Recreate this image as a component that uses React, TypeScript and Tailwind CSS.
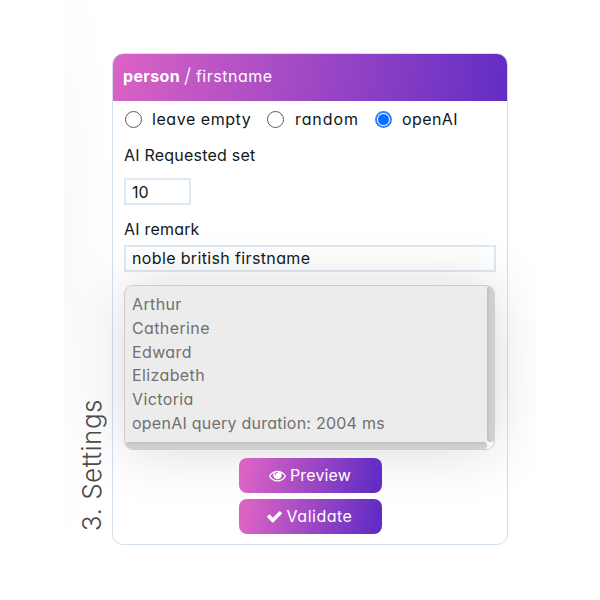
import React from "react";

function Radio({ checked = false }: { checked?: boolean }) {
  return (
    <span
      className={
        "flex h-[17px] w-[17px] shrink-0 items-center justify-center rounded-full bg-white " +
        (checked ? "border-2 border-[#2a86ff]" : "border border-[#5c5c5c]")
      }
    >
      {checked && <span className="h-[11px] w-[11px] rounded-full bg-[#0a6cff]" />}
    </span>
  );
}

function EyeIcon() {
  return (
    <svg viewBox="0 0 1792 1792" className="h-[17px] w-[17px]" fill="currentColor">
      <path d="M1664 960q-152-236-381-353 61 104 61 225 0 185-131.5 316.5t-316.5 131.5-316.5-131.5-131.5-316.5q0-121 61-225-229 117-381 353 133 205 333.5 326.5t434.5 121.5 434.5-121.5 333.5-326.5zm-720-384q0-20-14-34t-34-14q-125 0-214.5 89.5t-89.5 214.5q0 20 14 34t34 14 34-14 14-34q0-86 61-147t147-61q20 0 34-14t14-34zm848 384q0 34-20 69-140 230-376.5 368.5t-499.5 138.5-499.5-139-376.5-368q-20-35-20-69t20-69q140-229 376.5-368t499.5-139 499.5 139 376.5 368q20 35 20 69z" />
    </svg>
  );
}

function CheckIcon() {
  return (
    <svg viewBox="0 0 1792 1792" className="h-[17px] w-[17px]" fill="currentColor">
      <path d="M1671 566q0 40-28 68l-724 724-136 136q-28 28-68 28t-68-28l-136-136-362-362q-28-28-28-68t28-68l136-136q28-28 68-28t68 28l294 295 656-657q28-28 68-28t68 28l136 136q28 28 28 68z" />
    </svg>
  );
}

const names = ["Arthur", "Catherine", "Edward", "Elizabeth", "Victoria"];

export default function App() {
  return (
    <div className="h-[600px] w-[600px] bg-white font-['Inter','Liberation_Sans',sans-serif] text-[16px] leading-6 text-[#101820] [font-feature-settings:'cv11']">
      <div className="flex h-[600px] w-[537px] overflow-hidden pl-[64px]">
        <div className="flex h-[544px] w-12 shrink-0 items-end bg-[radial-gradient(ellipse_at_0%_45%,#f9f9f9,#ffffff_75%)] pb-[13px] pl-[9px]">
          <div className="rotate-180 whitespace-nowrap text-[26px] font-light leading-[37px] tracking-[0.5px] text-[#4a4a4a] [writing-mode:vertical-rl]">
            3. Settings
          </div>
        </div>
        <main className="mt-[53px] h-[492px] w-[396px] shrink-0 rounded-[11px] border border-[#d3e1ef]">
          <header className="flex h-[47px] items-center rounded-t-[10px] bg-[linear-gradient(100deg,#db63c4,#622dc4)] pb-[4px] pl-[10px] text-white">
            <b className="text-[16px] font-bold tracking-[0.35px]">person</b>
            <span className="ml-[4px] text-[20px] font-light leading-6">/</span>
            <span className="ml-[5px] text-[16px] tracking-[0.5px]">firstname</span>
          </header>
          <div className="pl-[11px]">
            <div className="mt-[6px] flex h-6 items-center pl-[1px]">
              <Radio />
              <span className="ml-[10px] w-[115px] tracking-[0.55px]">leave empty</span>
              <Radio />
              <span className="ml-[11px] w-[80px] tracking-[0.9px]">random</span>
              <Radio checked />
              <span className="ml-[10px] tracking-[0.4px]">openAI</span>
            </div>
            <div className="mt-3 tracking-[0.22px]">AI Requested set</div>
            <div className="mt-[11px] flex h-[27px] w-[67px] items-center border-2 border-[#dfe9f3] pl-[6px]">
              10
            </div>
            <div className="mt-3 tracking-[0.2px]">AI remark</div>
            <div className="mt-[4px] flex h-[27px] w-[372px] items-center border-2 border-[#dfe9f3] pb-px pl-[6px] tracking-[0.36px]">
              noble british firstname
            </div>
            <div className="mt-[13px] flex h-[165px] w-[371px] flex-col overflow-hidden rounded-[9px] border border-[#cdcdcd] bg-[#ececec] text-[#707070] shadow-[0_0_58px_rgba(0,0,0,0.15)]">
              <div className="flex h-[156px]">
                <div className="flex-1 pl-[7px] pt-[7px] leading-[23.8px] tracking-[0.38px]">
                  {names.map((n) => (
                    <div key={n}>{n}</div>
                  ))}
                  <div className="tracking-[0.24px]">openAI query duration: 2004 ms</div>
                </div>
                <div className="h-[156px] w-[7px] rounded-b-[4px] rounded-t-[4px] bg-gradient-to-r from-[#c2c2c2] via-[#cecece] to-[#d2d2d2]" />
              </div>
              <div className="flex h-[7px] bg-gradient-to-r from-[#ececec] from-90% to-[#f8f8f8]">
                <div className="h-[7px] w-[362px] rounded-r-[4px] rounded-l-[4px] bg-gradient-to-b from-[#c2c2c2] via-[#cecece] to-[#d2d2d2]" />
              </div>
            </div>
            <div className="mr-[11px] mt-2 flex flex-col items-center gap-[6px] text-white">
              <button className="flex h-[35px] w-[143px] items-center justify-center gap-[4px] rounded-[8px] bg-[linear-gradient(100deg,#db63c4_5%,#622dc4_95%)] pb-px tracking-[0.15px]">
                <EyeIcon />
                Preview
              </button>
              <button className="flex h-[35px] w-[143px] items-center justify-center gap-[4px] rounded-[8px] bg-[linear-gradient(100deg,#db63c4_5%,#622dc4_95%)] pb-px pr-[2px] tracking-[0.5px]">
                <CheckIcon />
                Validate
              </button>
            </div>
          </div>
        </main>
      </div>
    </div>
  );
}
